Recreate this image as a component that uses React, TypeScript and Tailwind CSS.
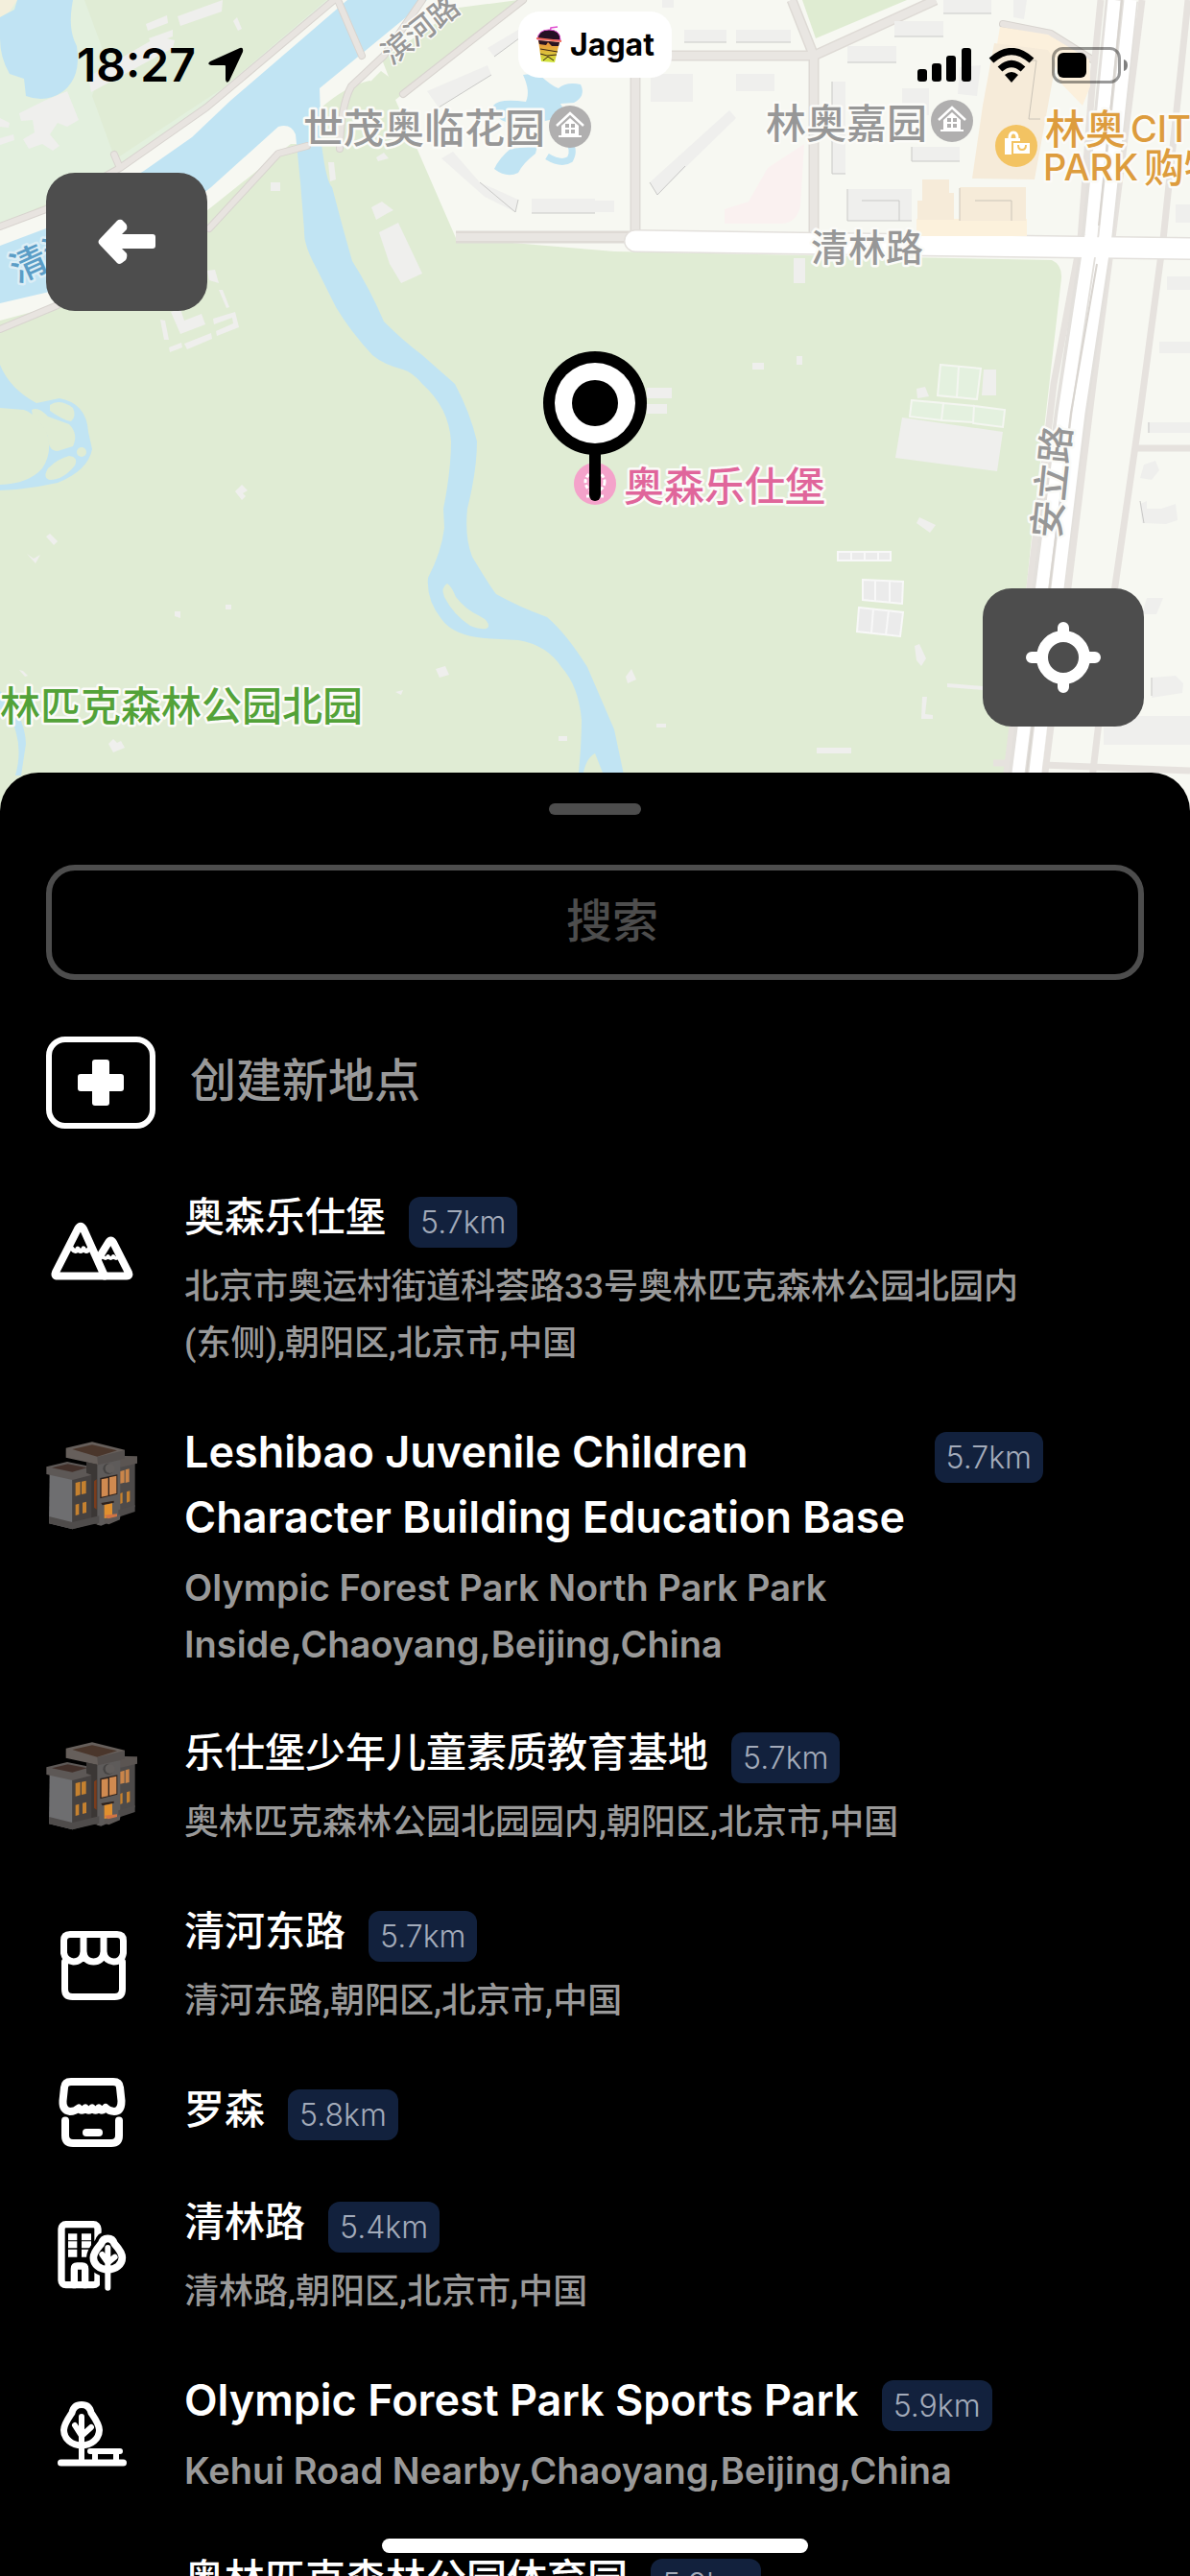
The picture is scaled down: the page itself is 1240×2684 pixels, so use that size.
import type { ReactNode } from "react";
import clsx from "clsx";

/* ─────────────────────────────────────────────────────────────────── */
/*  Data                                                               */
/* ─────────────────────────────────────────────────────────────────── */

type PlaceIcon = "mountain" | "building" | "market" | "store" | "residence" | "park";

interface Place {
  name: string;
  distance: string;
  address?: string;
  icon: PlaceIcon;
  latin?: boolean;
}

const PLACES: Place[] = [
  {
    name: "奥森乐仕堡",
    distance: "5.7km",
    address: "北京市奥运村街道科荟路33号奥林匹克森林公园北园内(东侧),朝阳区,北京市,中国",
    icon: "mountain",
  },
  {
    name: "Leshibao Juvenile Children Character Building Education Base",
    distance: "5.7km",
    address: "Olympic Forest Park North Park Park Inside,Chaoyang,Beijing,China",
    icon: "building",
    latin: true,
  },
  {
    name: "乐仕堡少年儿童素质教育基地",
    distance: "5.7km",
    address: "奥林匹克森林公园北园园内,朝阳区,北京市,中国",
    icon: "building",
  },
  {
    name: "清河东路",
    distance: "5.7km",
    address: "清河东路,朝阳区,北京市,中国",
    icon: "market",
  },
  { name: "罗森", distance: "5.8km", icon: "store" },
  {
    name: "清林路",
    distance: "5.4km",
    address: "清林路,朝阳区,北京市,中国",
    icon: "residence",
  },
  {
    name: "Olympic Forest Park Sports Park",
    distance: "5.9km",
    address: "Kehui Road Nearby,Chaoyang,Beijing,China",
    icon: "park",
    latin: true,
  },
  {
    name: "奥林匹克森林公园体育园",
    distance: "5.9km",
    address: "朝阳区,北京市,中国",
    icon: "park",
  },
];

/* ─────────────────────────────────────────────────────────────────── */
/*  Place icons                                                        */
/* ─────────────────────────────────────────────────────────────────── */

function LineIcon({ children }: { children: ReactNode }) {
  return (
    <svg
      viewBox="0 0 96 96"
      className="size-24"
      fill="none"
      stroke="#fff"
      strokeWidth="7"
      strokeLinecap="round"
      strokeLinejoin="round"
      aria-hidden="true"
    >
      {children}
    </svg>
  );
}

function MountainIcon() {
  return (
    <LineIcon>
      <path d="M33 24.500Q36 19 39 24.500L61 73.500H11Q8.500 73 10 69.500Z" strokeWidth="8" />
      <path d="M56 53L65 38.500Q67.500 34.500 70 38.500L86 70Q87.500 73.500 84 73.500H61" strokeWidth="8" />
      <path d="M27 45q4 5 6 0q3 5 6 0q3 5 6 0" strokeWidth="5" />
      <path d="M59 53q3 4 5.500 0q3 4 5.500 0q3 4 6 0" strokeWidth="4" />
    </LineIcon>
  );
}

function MarketIcon() {
  return (
    <LineIcon>
      <path d="M19.500 44V72.500Q19.500 80.500 27.500 80.500H71.500Q79.500 80.500 79.500 72.500V44" />
      <path d="M18.500 35V22Q18.500 15.500 25 15.500H74Q80.500 15.500 80.500 22V35Q79 44 70.500 44Q62 43 60 35Q58 44 49.500 44Q41 44 39 35Q37 44 28.500 44Q20 43 18.500 35Z" />
      <path d="M39 16V36M60 16V36" />
    </LineIcon>
  );
}

function StoreIcon() {
  return (
    <LineIcon>
      <path
        d="M26 17H70Q76.500 17 77 23L78.500 37Q78.500 48 71 48Q66 48 62 44Q58.500 49 55 44.500Q51.500 49 48 44.500Q44.500 49 41 44.500Q37 49 34 44.500Q30 48 25 48Q17 47 17.500 37L19 23Q19.500 17 26 17Z"
        strokeWidth="8"
      />
      <path d="M20 57.500V73Q20 81 28 81H68Q76 81 76 73V57.500" strokeWidth="8" />
      <path d="M42 70H55" strokeWidth="8" />
    </LineIcon>
  );
}

function ParkIcon() {
  return (
    <LineIcon>
      <path d="M37 16.500C43 16.500 46 20 47 25C51 31 55.500 37 55.500 43C55.500 52 47 59 37 59C27 59 18.500 52 18.500 43C18.500 37 23 31 27 25C28 20 31 16.500 37 16.500Z" />
      <path d="M37 29V77M37 49L30 38M37 49L47 40" strokeWidth="6" />
      <path d="M15.500 77H80.500" />
      <path d="M46 65H77M51 66V76M73 66V76" strokeWidth="6" />
    </LineIcon>
  );
}

function ResidenceIcon() {
  return (
    <svg viewBox="24 12 288 288" className="size-24" aria-hidden="true">
      <g fill="none" stroke="#fff" strokeLinecap="round" strokeLinejoin="round">
        <rect x="72" y="56" width="114" height="189" rx="14" strokeWidth="22" />
        <path d="M112 245V195Q112 186 121 186H137Q146 186 146 195V245" strokeWidth="22" />
      </g>
      <path fill="#fff" d="M93 85h28v21H93zM93 109h28v21H93zM93 134h28v24H93zM135 85h30v21h-30zM135 109h30v21h-30zM135 134h30v24h-30z" />
      <path
        d="M217 100C229 100 235 107 238 117C249 129 262 143 262 160C262 181 243 197 217 197C191 197 172 181 172 160C172 143 186 129 196 117C199 107 205 100 217 100Z"
        fill="#000"
        stroke="#000"
        strokeWidth="44"
      />
      <path d="M217 200V262" stroke="#000" strokeWidth="50" />
      <g fill="none" stroke="#fff" strokeLinecap="round" strokeLinejoin="round">
        <path
          d="M217 100C229 100 235 107 238 117C249 129 262 143 262 160C262 181 243 197 217 197C191 197 172 181 172 160C172 143 186 129 196 117C199 107 205 100 217 100Z"
          strokeWidth="23"
        />
        <path d="M217 129V254M217 176L199 150M217 176L239 158" strokeWidth="18" />
      </g>
    </svg>
  );
}

function BuildingIcon() {
  return (
    <svg viewBox="24 21 288 288" className="size-24" aria-hidden="true">
      {/* left wing */}
      <path fill="#6e6e70" d="M35 122L107 138V298L33 280Z" />
      <path fill="#454140" d="M107 138L188 122V275L107 298Z" />
      <path fill="#5d5856" d="M25 103L90 87L167 103V128L107 144L25 126Z" />
      <path fill="#42302a" d="M42 106L92 94L152 106L106 119Z" />
      {/* right wing */}
      <path fill="#4d4a49" d="M248 90L302 86V228L248 262Z" />
      <path fill="#5b5552" d="M240 68L309 70V92L258 104L240 98Z" />
      {/* tower */}
      <path fill="#3b3735" d="M150 88L187 96V285L166 278V128L150 122Z" />
      <path fill="#5e5b5a" d="M184 94L256 80V262L196 287L184 284Z" />
      <path fill="#665f5b" d="M86 44L168 25L270 50V78L186 96L86 74Z" />
      <path fill="#4a362b" d="M106 48L168 34L246 52L184 71Z" />
      <path fill="#55504e" d="M184 72L270 51V78L186 97Z" />
      <circle cx="219" cy="109" r="17" fill="#464443" />
      <circle cx="224" cy="108" r="15" fill="#625e5c" />
      {/* footings */}
      <path fill="#4f4c4b" d="M33 258L106 276V298L33 280ZM106 276L190 256V278L106 298ZM250 238L302 222V243L250 260Z" />
      <path fill="#5d5856" d="M208 264L255 252V268L220 283L206 278Z" />
      {/* lit windows */}
      <path fill="#7a3c1c" d="M174 148L182 142V236L174 230Z" />
      <path fill="#2d221d" d="M193 138L247 127V188L193 202Z" />
      <path fill="#d08a50" d="M197 142L218 138V193L197 197ZM222 136L244 131V186L222 191Z" />
      <path fill="#c5812f" d="M116 153L131 149V190L116 194ZM135 149L149 146V186L135 189ZM116 221L127 218V252L116 255ZM138 215L150 212V246L138 249Z" />
      <path fill="#c9854a" d="M256 117L269 113V152L256 155ZM272 112L284 109V150L272 153Z" />
      <path fill="#c5812f" d="M256 186L263 183V216L256 219ZM276 181L286 178V211L276 215Z" />
      <path fill="#2d221d" d="M196 216L236 209V215L200 223Z" />
      <path fill="#e0902f" d="M206 222L231 217V260L206 264Z" />
      <path fill="#d07445" d="M206 254L246 250V258L218 265Z" />
    </svg>
  );
}

const PLACE_ICONS: Record<PlaceIcon, () => ReactNode> = {
  mountain: MountainIcon,
  building: BuildingIcon,
  market: MarketIcon,
  store: StoreIcon,
  residence: ResidenceIcon,
  park: ParkIcon,
};

/* ─────────────────────────────────────────────────────────────────── */
/*  Map                                                                */
/* ─────────────────────────────────────────────────────────────────── */

const LANES =
  "M348 0L215 112L125 175L48 218L0 236M125 175L119 161M0 343L60 318M218 238L290 160L320 152M352 0L377 58M440 0L400 58L366 90Q355 110 354 155M545 0L420 98M1045 25L1095 35L1138 62";

function HousePoi({ x, y }: { x: number; y: number }) {
  return (
    <g transform={`translate(${x} ${y})`}>
      <circle r="22" fill="#b0afaf" />
      <path d="M-14 -1L0 -14L14 -1" fill="none" stroke="#fff" strokeWidth="2.500" />
      <path d="M-9 -1L0 -9L9 -1V9H-9Z" fill="#fff" />
      <path d="M-12 10H12" stroke="#fff" strokeWidth="2" />
      <path d="M-5 -3h4v4h-4zM1 -3h4v4h-4zM-5 3h4v4h-4zM1 3h4v4h-4z" fill="#b0afaf" />
    </g>
  );
}

function MapCanvas() {
  return (
    <svg
      viewBox="0 0 1240 845"
      preserveAspectRatio="xMidYMin slice"
      className="absolute inset-0 size-full"
      role="img"
      aria-label="地图"
    >
      <rect width="1240" height="845" fill="#e0ecd4" />

      {/* north-west green and its pond */}
      <path d="M0 0H355L210 115L125 178L0 234Z" fill="#e3f0de" />
      <path d="M88 0H340L232 92L120 166L96 100L110 60Z" fill="#e0ecd5" />
      <path d="M0 0H18L10 12L0 18Z" fill="#f3efdc" />
      <path d="M18 0H76Q70 30 80 48Q85 80 66 95Q48 108 27 100L25 82L10 77Q0 60 0 40V18L15 10Z" fill="#c0e3f3" />

      {/* river banks */}
      <path d="M350 0H555L430 105L412 85L397 74Q380 90 366 110L340 115L318 150H303L220 216L140 278L60 318L0 334V236L125 178L215 110Z" fill="#f7f8f2" />
      <path d="M478 8L540 0L420 99L405 80L398 62Z" fill="#e0ecd4" />
      <path d="M335 112Q360 90 385 84Q402 88 412 118L420 130L340 155Z" fill="#e0ecd4" />

      {/* urban area */}
      <path d="M545 0H1240V845H1040L1052 780L1075 560L1106 290Q1107 276 1096 271L640 262L475 248L428 140L412 104Z" fill="#f7f8f2" />
      <path d="M836 0L850 40L945 0Z" fill="#dfecd2" />

      {/* river */}
      <path d="M362 0H445L333 92L335 150Q340 190 346 195L358 240L367 272Q385 300 400 335Q420 355 440 370L474 400Q490 430 497 460Q497 490 487 530Q484 560 492 580Q510 610 517 619Q540 632 570 643Q590 660 612 695L640 760L658 845H598Q606 790 606 750Q603 715 585 695Q570 672 540 667L505 665Q472 662 460 645Q444 625 446 602Q460 575 463 550L462 530Q470 490 470 460Q468 425 440 400Q430 388 420 385Q400 380 388 370Q365 345 350 320L330 280Q316 255 317 240L313 190L308 140Q303 128 290 132L220 195L140 258L60 302L0 316V256L48 238L150 178L200 143L240 105Z" fill="#c1e4f3" />
      <path d="M466 608Q470 610 475 622Q485 635 500 642Q510 647 509 653Q506 658 490 652Q472 640 463 622Q459 612 466 608Z" fill="#e0ecd4" />
      <path d="M620 785Q610 790 607 810H630Z" fill="#e0ecd4" />

      {/* west ponds */}
      <path d="M0 380Q10 405 38 420L62 415Q90 420 92 450L96 468Q92 490 60 503Q30 510 0 511V505Q30 504 44 488Q56 470 48 448Q36 430 25 427L0 425Z" fill="#c1e4f3" />
      <g fill="#e0ecd4">
        <path d="M52 422Q62 415 76 425Q80 434 74 439Q66 438 52 428Z" />
        <path d="M33 427Q40 423 50 434L72 442Q82 452 76 465L60 470Q50 470 50 455Q44 440 34 434Z" />
        <circle cx="85" cy="471" r="5" />
        <path d="M72 475Q82 476 78 485Q66 500 52 500Q44 498 50 488Q60 478 72 475Z" />
      </g>
      <path d="M0 720Q26 745 27 775L22 808H16Q24 780 14 755L0 738Z" fill="#c1e4f3" />
      <path d="M560 76Q575 90 582 92Q590 85 605 88Q611 100 598 107L584 108Q590 117 585 122L560 128L545 125L530 128Q515 124 514 110Q520 102 548 106Q553 95 545 78Z" fill="#c1e4f3" />
      <path d="M532 155L560 152L558 160Q545 170 540 180Q528 186 515 176Q520 165 532 155Z" fill="#c1e4f3" />
      <path d="M590 145Q600 155 594 166Q585 172 570 163" fill="none" stroke="#c1e4f3" strokeWidth="7" />

      {/* minor roads */}
      <g fill="none" strokeLinejoin="round" strokeLinecap="round">
        <path d={LANES} stroke="#d8d4cf" strokeWidth="8" />
        <path d={LANES} stroke="#e8e4e0" strokeWidth="6" />
      </g>
      <g fill="none" stroke="#dedad5" strokeWidth="11">
        <path d="M660 58H845M662 70V245M848 55V246M825 0L848 58L975 0" />
        <path d="M475 247H660" strokeWidth="13" />
      </g>
      <g fill="none" stroke="#e9e6e2" strokeWidth="8">
        <path d="M660 58H845M662 70V245M848 55V246M825 0L848 58L975 0M475 247H660" />
      </g>
      <g fill="none" stroke="#e6e2de" strokeWidth="7">
        <path d="M1147 0L1138 90L1126 250L1098 400L1072 620L1044 845" />
        <path d="M1190 0L1160 240L1139 400L1112 620L1084 845" />
        <path d="M1238 0L1212 250L1188 430L1162 610L1134 845" />
        <path d="M1182 467H1240M1086 797L1240 803M1035 795H1060" />
      </g>

      {/* main roads */}
      <path d="M662 251L1240 259" fill="none" stroke="#e3e0dc" strokeWidth="24" strokeLinecap="round" />
      <path d="M1169 0L1144 245L1116 430L1063 845" fill="none" stroke="#e3e0dc" strokeWidth="34" />
      <path d="M662 251L1240 259" fill="none" stroke="#fff" strokeWidth="21" strokeLinecap="round" />
      <path d="M1161 0L1137 245L1109 430L1056 845M1178 0L1152 245L1124 430L1074 845" fill="none" stroke="#fff" strokeWidth="13" />
      <path d="M1169 0L1145 235M1143 275L1116 430L1065 845" fill="none" stroke="#d9d5d0" strokeWidth="2" />

      {/* mall blocks */}
      <g>
        <path d="M1042 28L1092 36L1135 62L1136 90L1128 110L1104 85L1098 60L1038 52Z" fill="#fcf0dc" />
        <path d="M1036 45L1092 52L1100 66L1078 187L1013 186L1024 110Z" fill="#f6ebd9" />
        <path d="M955 228H1070V246H955Z" fill="#fcf1dc" />
        <path d="M961 187H989V201H994V229H956V209H961ZM1000 195H1069V230H1000Z" fill="#f6ebd9" />
        <path d="M1070 63H1080L1072 124L1084 124M1000 196V230M1016 209H1054V230" fill="none" stroke="#cbc4b8" strokeWidth="1" />
        <path d="M838 150L834 215Q830 232 815 233H755V218L780 210L800 175Z" fill="#faf1f0" />
      </g>

      {/* buildings */}
      <g fill="#efefed">
        <path d="M185 17L232 0L231 12L188 27ZM152 25L174 16L175 24L154 32ZM155 40L180 31L180 38L158 46ZM92 80L165 38L182 42L180 50L95 96ZM243 22L247 18L252 30L248 32Z" />
        <path d="M20 118L46 105L70 95L82 125L70 132L60 128L52 140L62 152L55 157L44 150L30 155L24 145L36 138L34 125L22 126ZM0 123L10 128L9 133L0 132ZM0 144L14 140L15 146L0 151Z" />
        <path d="M282 190H292V199H282ZM342 169H348L350 187L344 189ZM387 216L398 210L410 219L404 222L392 229ZM395 242L415 232L440 285L418 295L406 275ZM392 164L400 159L405 165L394 168Z" />
        <path d="M178 325L188 322L192 334L210 327L214 338L188 348ZM167 333L172 334L176 354L171 354ZM192 358L220 347L221 353L195 364ZM222 332L245 325L249 341L226 350L225 345L243 337L242 331L223 338ZM176 362L189 357L190 362L177 367ZM228 302L232 302L239 320L236 321ZM216 282L224 281L228 295L218 292Z" />
        <path d="M445 95L508 68L512 78L457 112ZM508 50L545 28V37L515 59ZM460 165L472 158L500 190L540 208L537 221L505 205ZM554 207H620V222H554Z" />
        <path d="M690 0H702V8H690ZM713 31H757V44H713ZM767 31H824V44H767ZM678 77H722V106H678ZM767 77H807V95H767ZM677 190L760 115L767 123L685 203ZM620 209H640V221H620Z" />
        <path d="M983 0H1033V14H983ZM932 22H983V38H932ZM883 48H934V65H883ZM1056 0H1070L1067 20L1056 18ZM867 85H881V181H867ZM950 153H1000V168H950ZM883 197H950V230H883ZM940 92H968V120H940ZM1000 70L1022 68L1018 100L998 98ZM1225 213H1240V232H1225ZM1216 288H1240V302H1216ZM1208 356H1240V368H1208Z" />
        <path d="M827 269H839V295H827ZM784 378H796V385H784ZM830 371H836V380H830ZM674 404H700V415H674ZM674 421H695V431H674ZM955 405L964 403L968 413L956 415ZM1025 385H1038V412H1023Z" />
        <path d="M940 435L1045 450L1039 491L933 477ZM958 539L975 547L969 555L955 545Z" />
        <path d="M245 512L252 505L258 511L253 514L256 517L252 521ZM48 559L52 556L60 564L56 568ZM28 577L35 582L42 578L37 587ZM182 637H188V644L182 642ZM235 630H241V635H235ZM454 697L464 694L468 703L458 706ZM412 721L420 719L418 724ZM582 767H591V772H582ZM113 775L118 770L122 774L126 772L130 779L118 784ZM20 698L24 699L29 704L26 705ZM652 705L658 697L663 708L654 712ZM684 754H694V758H684ZM851 779H887V785H851ZM953 673L958 671L965 686L960 694L955 688ZM987 712L1024 715V719L987 716ZM961 726H966L964 744L972 745V749H960Z" />
        <path d="M1196 440H1240V451H1196ZM1188 525L1195 522V530H1210L1225 525L1227 542L1215 546L1190 545ZM1195 623H1212L1205 640H1190ZM1200 706L1225 704L1233 712L1232 722L1200 727ZM1160 746H1240V776H1150V758H1160Z" />
        <path d="M1192 484L1204 480L1208 490L1200 500L1188 498Z" />
      </g>
      <g fill="#e4f1df" stroke="#f4f6f1" strokeWidth="2">
        <path d="M980 380L1022 384L1018 416L977 412ZM999 382L997 414M950 417L983 420L981 438L948 434ZM983 420L1015 423L1014 440L981 438ZM1015 423L1047 427L1045 445L1014 441Z" />
      </g>
      <g fill="#ebebeb" stroke="#f8f8f8" strokeWidth="2">
        <path d="M873 575H928V584H873ZM887 575V584M901 575V584M915 575V584M899 604L941 606L940 629L899 625ZM912 604V626M927 605V628M895 633L941 638L938 663L893 658ZM910 634L908 660M926 636L923 662" />
      </g>
      <g fill="none" stroke="#c9c9c7" strokeWidth="1">
        <path d="M457 112L512 78M515 59L545 37M500 190L537 221L540 208M554 222H620M713 44H757M767 44H824M983 14H1033M932 38H983M883 65H934M867 181H881M867 85V181M950 153V168H1000M883 197V230H950M898 209H937V230M677 190L685 203L714 173M1188 522L1192 545M1200 706V725M1197 440V451" />
      </g>

      {/* labels */}
      <g
        fontFamily="Inter, 'Noto Sans CJK SC', sans-serif"
        fontWeight="500"
        fontSize="42"
        fill="#979797"
        stroke="#fbfbf8"
        strokeWidth="5"
        strokeLinejoin="round"
        paintOrder="stroke"
      >
        <text x="316" y="149">世茂奥临花园</text>
        <text x="798" y="144">林奥嘉园</text>
        <text x="845" y="272" fontSize="39">清林路</text>
        <text x="1089" y="150" fill="#dd9c3d">林奥</text>
        <text x="1178" y="148" fill="#dd9c3d" fontSize="38">CITY</text>
        <text x="1087" y="188" fill="#dd9c3d" fontSize="38">PARK</text>
        <text x="1192" y="190" fill="#dd9c3d">购物</text>
        <text x="650" y="522" fill="#e0669b">奥森乐仕堡</text>
        <text x="0" y="751" fill="#53a238">林匹克森林公园北园</text>
        <text transform="translate(1096 502) rotate(-84)" textAnchor="middle" y="14" fontSize="39">安立路</text>
        <text transform="translate(438 31) rotate(-38)" textAnchor="middle" y="11" fontSize="31" strokeWidth="3">滨河路</text>
        <text transform="translate(18 295) rotate(-24)" fontSize="38" fill="#5b9dc6" stroke="#dceef6">清河</text>
      </g>

      {/* points of interest */}
      <HousePoi x={594} y={132} />
      <HousePoi x={992} y={126} />
      <g transform="translate(1059 152)">
        <circle r="22" fill="#f3c362" />
        <path d="M-12 -8H4V9H-12Z" fill="#fff" />
        <path d="M-7 -8Q-7 -14 -3 -14Q1 -14 1 -8" fill="none" stroke="#fff" strokeWidth="3" />
        <path d="M-4 -4H15V9H-4Z" fill="#fff" stroke="#f3c362" strokeWidth="2" />
        <path d="M2 -1Q2 4 6 4Q10 4 10 -1" fill="none" stroke="#f3c362" strokeWidth="2" />
      </g>
      <circle cx="620" cy="504" r="22" fill="#f4a2ca" />
      <circle cx="620" cy="502" r="10" fill="none" stroke="#fff" strokeWidth="3" strokeDasharray="4 2" />
      <path d="M611 517H629" stroke="#fff" strokeWidth="3" />

      {/* picked location */}
      <path d="M620 460V516" stroke="#000" strokeWidth="12" strokeLinecap="round" />
      <circle cx="620" cy="420" r="54" fill="#000" />
      <circle cx="620" cy="420" r="42" fill="#fff" />
      <circle cx="620" cy="420" r="24" fill="#000" />
    </svg>
  );
}

/* ─────────────────────────────────────────────────────────────────── */
/*  Status bar                                                         */
/* ─────────────────────────────────────────────────────────────────── */

function StatusBar() {
  return (
    <header className="grid h-[120px] grid-cols-3 text-black">
      <div className="flex items-center gap-3 pt-4 pl-20">
        <span className="text-5xl font-semibold">18:27</span>
        <svg viewBox="0 0 38 38" className="size-[38px]" aria-hidden="true">
          <path d="M34 1Q38 0 37 5L23 35Q20 39 19 34V20Q19 19 18 19H4Q-1 18 3 15Z" />
        </svg>
      </div>

      <div className="mt-3 flex h-[69px] items-center gap-2 justify-self-center rounded-[22px] bg-white px-[18px]">
        <svg viewBox="0 0 28 40" className="h-10 w-7" aria-hidden="true">
          <defs>
            <linearGradient id="cup" x1="0" x2="0" y1="0" y2="1">
              <stop offset="0" stopColor="#f08a3c" />
              <stop offset="1" stopColor="#cfe63a" />
            </linearGradient>
          </defs>
          <path d="M15 6L16 2L23 1" fill="none" stroke="#e04fd0" strokeWidth="1.500" />
          <path d="M2 14Q3 4 14 4Q26 4 26 15Z" fill="#241024" stroke="#e04fd0" strokeWidth="1" />
          <path d="M3 15L25 17L20 38L6 37Z" fill="url(#cup)" />
          <path d="M3 15L25 17L24 21L17 21L13 17L11 20L4 19Z" fill="#2a1420" />
          <path d="M1 13L27 16" stroke="#f06a5a" strokeWidth="2" />
          <path d="M5 24L23 27M5 29L12 31L22 30M8 36L13 32L19 36" fill="none" stroke="#3a2415" strokeWidth="1" />
        </svg>
        <span className="text-[32px] leading-10 font-bold">Jagat</span>
      </div>

      <div className="flex items-center justify-end gap-[18px] pt-4 pr-16">
        <svg viewBox="0 0 56 36" className="h-9 w-14" aria-hidden="true">
          <rect x="0" y="22" width="10" height="13" rx="3" />
          <rect x="15" y="16" width="10" height="19" rx="3" />
          <rect x="30" y="8" width="10" height="27" rx="3" />
          <rect x="46" y="0" width="10" height="35" rx="3" />
        </svg>
        <svg viewBox="0 0 48 36" className="h-9 w-12" aria-hidden="true">
          <path d="M3 13Q24 -6 45 13M12 22Q24 11 36 22" fill="none" stroke="#000" strokeWidth="7" />
          <path d="M17 28Q24 22 31 28L24 36Z" />
        </svg>
        <svg viewBox="0 0 80 38" className="h-[38px] w-20" aria-hidden="true">
          <rect x="1.500" y="1.500" width="69" height="35" rx="10" fill="none" stroke="#000" strokeOpacity=".4" strokeWidth="3" />
          <rect x="6" y="6" width="30" height="26" rx="6" />
          <path d="M75 13Q79 14 79 19Q79 24 75 25Z" fillOpacity=".5" />
        </svg>
      </div>
    </header>
  );
}

/* ─────────────────────────────────────────────────────────────────── */
/*  Bottom sheet                                                       */
/* ─────────────────────────────────────────────────────────────────── */

function PlaceRow({ place }: { place: Place }) {
  const Icon = PLACE_ICONS[place.icon];

  return (
    <li className="flex items-start gap-12">
      <div className={clsx("shrink-0", place.address ? "mt-[22px]" : "-mt-3 -mb-4")}>
        <Icon />
      </div>
      <div className="min-w-0 flex-1">
        <div className="flex items-start gap-6">
          <h2
            className={clsx(
              "leading-[68px] text-white",
              place.latin ? "text-[45px] font-semibold" : "text-[42px] font-medium",
            )}
          >
            {place.name}
          </h2>
          <span className="mt-[13px] flex h-[53px] shrink-0 items-center rounded-xl bg-[#12213d] px-3 text-[32px] font-light text-[#a3abba]">
            {place.distance}
          </span>
        </div>
        {place.address && (
          <p
            className={clsx(
              "mt-2.5 leading-[59px] text-[#999]",
              place.latin
                ? "text-[38px] font-semibold"
                : "font-[Roboto,'Noto_Sans_CJK_SC',sans-serif] text-[36px] font-medium",
            )}
          >
            {place.address}
          </p>
        )}
      </div>
    </li>
  );
}

function PlaceSheet() {
  return (
    <main className="relative -mt-10 min-h-0 flex-1 overflow-hidden rounded-t-[40px] bg-black px-12 pt-8">
      <div className="mx-auto h-3 w-24 rounded-full bg-[#4d4d4d]" />

      <input
        type="text"
        aria-label="搜索"
        placeholder="搜索"
        className="mt-[52px] h-[120px] w-full rounded-[30px] border-6 border-[#4d4d4d] bg-transparent pb-1 pl-9 text-center text-5xl font-medium text-white outline-none placeholder:text-[#4d4d4d]"
      />

      <button type="button" className="mt-[59px] flex items-center gap-9">
        <span className="flex h-24 w-[114px] items-center justify-center rounded-[20px] border-6 border-white">
          <svg viewBox="0 0 48 48" className="size-12" fill="#fff" aria-hidden="true">
            <rect x="15" y="0" width="18" height="48" rx="3" />
            <rect x="0" y="15" width="48" height="18" rx="3" />
          </svg>
        </span>
        <span className="pb-1 text-5xl font-medium text-[#999]">创建新地点</span>
      </button>

      <ul className="mt-[58px] flex flex-col gap-[49px] pr-[105px]">
        {PLACES.map((place) => (
          <PlaceRow key={place.name} place={place} />
        ))}
      </ul>
    </main>
  );
}

/* ─────────────────────────────────────────────────────────────────── */
/*  Screen                                                             */
/* ─────────────────────────────────────────────────────────────────── */

export default function App() {
  return (
    <div className="relative flex h-screen flex-col overflow-hidden bg-black font-[Inter,'Noto_Sans_CJK_SC',sans-serif]">
      <section className="relative h-[845px] shrink-0">
        <MapCanvas />
        <div className="relative flex h-full flex-col">
          <StatusBar />
          <div className="flex flex-1 flex-col justify-between px-12 pt-[60px] pb-[88px]">
            <button
              type="button"
              aria-label="返回"
              className="flex h-36 w-42 items-center justify-center rounded-[30px] bg-[#4d4d4d]"
            >
              <svg viewBox="0 0 60 48" className="h-12 w-15" fill="#fff" aria-hidden="true">
                <path d="M2 21L20 2Q22 0 25 1L29 5Q31 7 30 11L25 16H57Q60 16 60 19V28Q60 31 57 31H25L30 36Q31 40 29 43L25 46Q22 48 20 46L2 27Q-1 24 2 21Z" />
              </svg>
            </button>
            <button
              type="button"
              aria-label="定位"
              className="flex h-36 w-42 items-center justify-center self-end rounded-[30px] bg-[#4d4d4d]"
            >
              <svg viewBox="0 0 78 78" className="size-[78px]" fill="none" stroke="#fff" strokeWidth="12" strokeLinecap="round" aria-hidden="true">
                <circle cx="39" cy="39" r="22" />
                <path d="M39 8V14M39 64V70M6 39H14M64 39H72" />
              </svg>
            </button>
          </div>
        </div>
      </section>

      <PlaceSheet />

      {/* home indicator */}
      <div className="absolute bottom-6 left-1/2 h-[15px] w-[444px] -translate-x-1/2 rounded-full bg-white" />
    </div>
  );
}
